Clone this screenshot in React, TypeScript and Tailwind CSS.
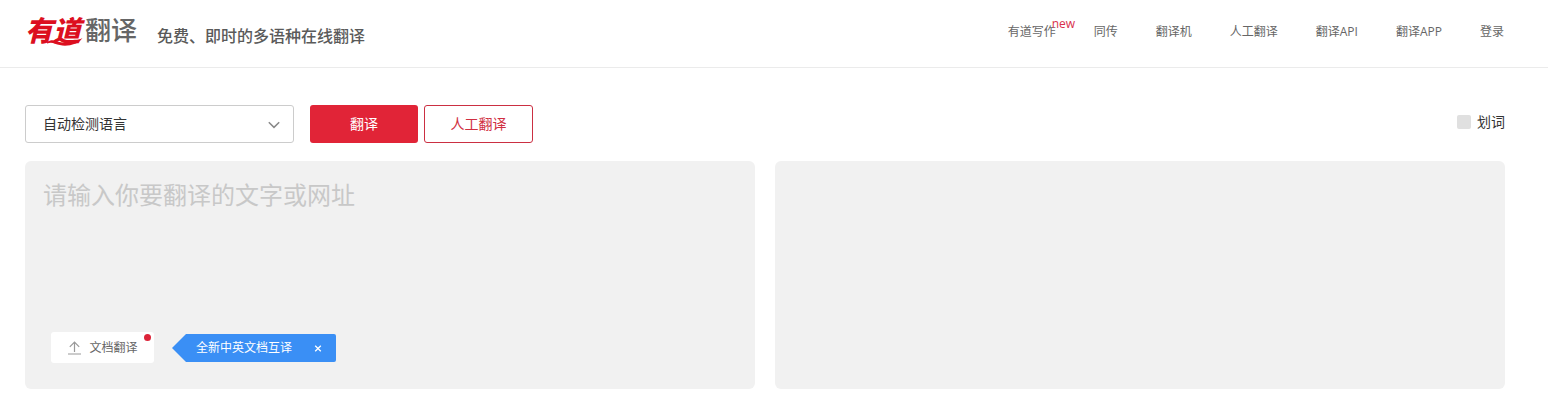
import React from "react";

const NAV: { label: string; isNew?: boolean }[] = [
  { label: "有道写作", isNew: true },
  { label: "同传" },
  { label: "翻译机" },
  { label: "人工翻译" },
  { label: "翻译API" },
  { label: "翻译APP" },
  { label: "登录" },
];

function Logo() {
  return (
    <a href="#" className="flex items-center gap-1 pb-1">
      <span className="relative text-[28px] leading-10 font-black italic text-[#dc0f1f]">
        有道
        <svg
          className="absolute left-[22px] top-6 h-3 w-9"
          viewBox="0 0 36 12"
          fill="#dc0f1f"
          aria-hidden="true"
        >
          <path d="M0 8.2C3 6 6 5.8 9 7C17 10 27 9.2 35.5 4C30 11.8 17 13.4 8 9.8C5 8.6 3 8.6 0 9.6Z" />
        </svg>
      </span>
      <span className="text-[26px] leading-10 font-medium text-[#666]">翻译</span>
    </a>
  );
}

function Header() {
  return (
    <header className="border-b border-[#ebebeb] bg-white pr-11 pl-[25px]">
      <div className="flex h-[67px] items-center justify-between pb-1">
        <div className="flex items-center gap-5">
          <Logo />
          <h1 className="pt-2 text-base leading-6 font-medium text-[#5a5a5a]">
            免费、即时的多语种在线翻译
          </h1>
        </div>
        <nav className="flex gap-[38px] text-xs leading-5 text-[#666]">
          {NAV.map((item) => (
            <a key={item.label} href="#" className="relative whitespace-nowrap">
              {item.label}
              {item.isNew && (
                <span className="absolute -top-2 left-11 leading-5 text-[#d9304c]">
                  new
                </span>
              )}
            </a>
          ))}
        </nav>
      </div>
    </header>
  );
}

function Toolbar() {
  return (
    <div className="flex items-center justify-between">
      <div className="flex items-center">
        <div className="relative mr-4 w-[269px]">
          <select
            aria-label="语言"
            className="h-[38px] w-full appearance-none rounded-[3px] border border-[#ccc] bg-white px-[17px] text-sm text-[#333]"
          >
            <option>自动检测语言</option>
          </select>
          <svg
            className="pointer-events-none absolute top-4 right-3.5 h-2 w-3"
            viewBox="0 0 12 8"
            fill="none"
            stroke="#888"
            strokeWidth="1.5"
            aria-hidden="true"
          >
            <path d="M0.8 1.2L6 6.4L11.2 1.2" />
          </svg>
        </div>
        <button
          type="button"
          className="mr-1.5 h-[38px] w-[108px] rounded-[3px] bg-[#e12437] text-sm text-white"
        >
          翻译
        </button>
        <button
          type="button"
          className="h-[38px] w-[109px] rounded-[3px] border border-[#cb2f42] bg-white text-sm text-[#d02f42]"
        >
          人工翻译
        </button>
      </div>
      <label className="flex items-center gap-1.5 pb-1 text-sm text-[#333]">
        <input
          type="checkbox"
          className="size-3.5 appearance-none rounded-xs bg-[#e0e0e0] checked:bg-[#e12437]"
        />
        划词
      </label>
    </div>
  );
}

function SourcePanel() {
  return (
    <section className="flex h-[228px] flex-col rounded-md bg-[#f1f1f1] px-[18px] pt-4 pb-[26px]">
      <textarea
        aria-label="原文"
        placeholder="请输入你要翻译的文字或网址"
        className="w-full flex-1 resize-none bg-transparent text-2xl leading-9 text-[#333] outline-none placeholder:text-[#c8c8c8]"
      />
      <div className="flex items-center gap-[18px] pl-2">
        <button
          type="button"
          className="relative flex h-[31px] w-[103px] items-center justify-center gap-2 rounded-[3px] bg-white text-xs text-[#666]"
        >
          <svg
            className="h-3.5 w-3.5"
            viewBox="0 0 14 14"
            fill="none"
            stroke="#999"
            strokeWidth="1.2"
            aria-hidden="true"
          >
            <path d="M7.5 11V1.2M2.8 5.9L7.5 1.2L12.2 5.9M1 13H14" />
          </svg>
          文档翻译
          <span className="absolute top-0.5 right-[3px] size-[7px] rounded-full bg-[#dc2338]" />
        </button>
        <div className="flex h-7 items-stretch text-xs text-white">
          <svg className="h-7 w-3.5" viewBox="0 0 14 28" fill="#3a8ff5" aria-hidden="true">
            <path d="M14 0L0 14L14 28Z" />
          </svg>
          <div className="flex w-[150px] items-center justify-between rounded-r-xs bg-[#3a8ff5] pr-3.5 pl-2.5">
            <span>全新中英文档互译</span>
            <button type="button" aria-label="关闭" className="flex size-2 items-center justify-center">
              <svg className="size-2" viewBox="0 0 8 8" stroke="#fff" strokeWidth="1.3" aria-hidden="true">
                <path d="M1.2 1.7L6.8 7.3M6.8 1.7L1.2 7.3" />
              </svg>
            </button>
          </div>
        </div>
      </div>
    </section>
  );
}

export default function App() {
  return (
    <div className="bg-white font-['Open_Sans','Noto_Sans_CJK_SC',sans-serif]">
      <Header />
      <main className="pt-[37px] pr-[43px] pb-7 pl-[25px]">
        <Toolbar />
        <div className="mt-[18px] grid grid-cols-2 gap-5">
          <SourcePanel />
          <section aria-label="译文" className="h-[228px] rounded-md bg-[#f1f1f1]" />
        </div>
      </main>
    </div>
  );
}
